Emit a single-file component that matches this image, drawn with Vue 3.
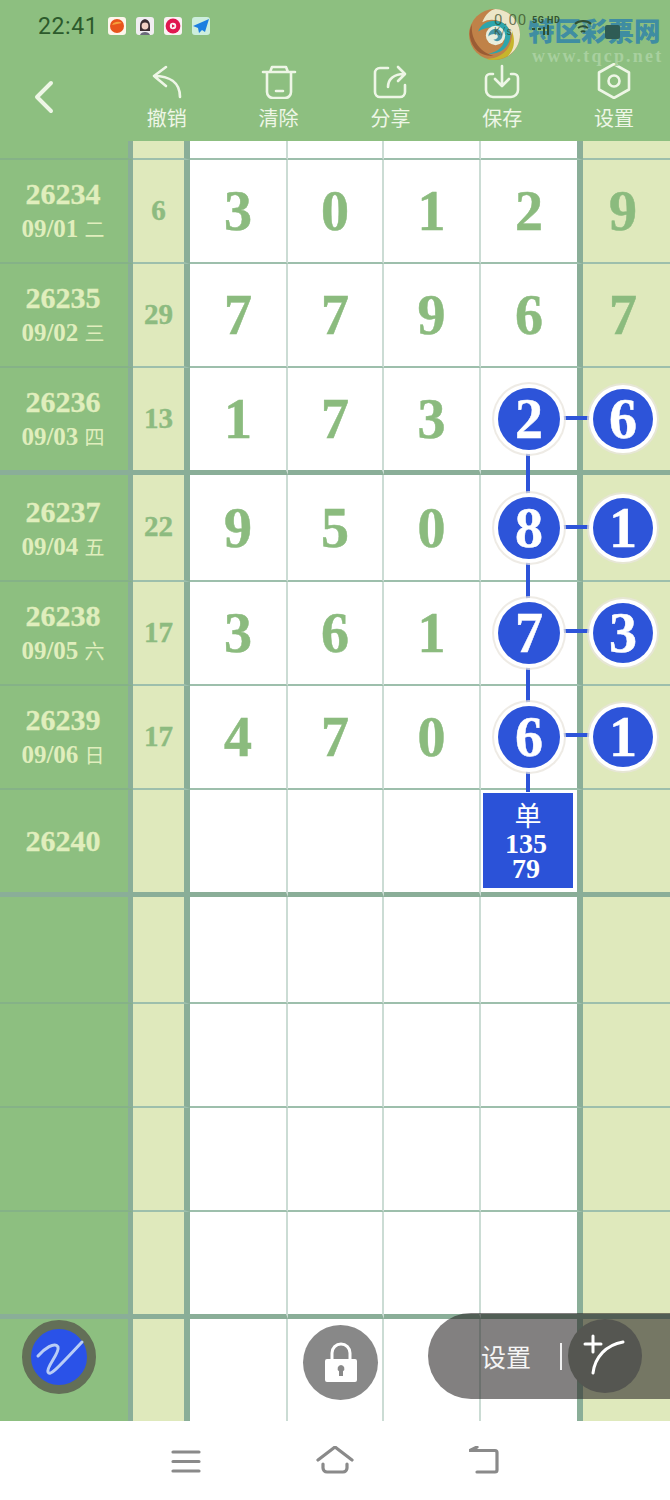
<template>
  <div class="page">
    <header class="top">
      <div class="status">
        <span class="time">22:41</span>
        <div class="notify">
          <svg class="app" viewBox="0 0 18 18"><rect width="18" height="18" rx="3" fill="#fdf6ec"/><circle cx="9" cy="9" r="7" fill="#e8541c"/><path d="M4 8a6 4 0 0 1 10-2" fill="#f5a03c"/></svg>
          <svg class="app" viewBox="0 0 18 18"><rect width="18" height="18" rx="3" fill="#f2eef2"/><path d="M4 9c0-9 10-9 10 0v5H4z" fill="#3a2c30"/><circle cx="9" cy="9" r="3.400" fill="#f1cfc2"/><path d="M4 18c1-4 9-4 10 0z" fill="#6a6a7a"/></svg>
          <svg class="app" viewBox="0 0 18 18"><rect width="18" height="18" rx="3" fill="#fbf2f4"/><circle cx="9" cy="9" r="7.400" fill="#e0174f"/><circle cx="9" cy="9" r="3.200" fill="#fbf2f4"/><path d="M8 7.300 11 9 8 10.700z" fill="#e0174f"/></svg>
          <svg class="app" viewBox="0 0 18 18"><rect width="18" height="18" rx="3" fill="#cdeedd"/><path d="M17 2 1 9l5 2 1 5 3-3 3 2z" fill="#1c7fe0"/></svg>
        </div>
      </div>

      <div class="toolbar">
        <div class="back">
          <svg width="24" height="36" viewBox="0 0 24 36"><path d="M19 4 5 18l14 14" class="line thick-line"/></svg>
        </div>
        <div class="tool">
          <svg class="tool-icon" viewBox="0 0 36 36"><path d="M17 4 5 13l12 10M5 13c15 0 26 6 26 21" class="line"/></svg>
          <span>撤销</span>
        </div>
        <div class="tool">
          <svg class="tool-icon" viewBox="0 0 36 36"><path d="M2 9h32M9 9l2-5h14l2 5M6 9v20a6 6 0 0 0 6 6h12a6 6 0 0 0 6-6V9M15 28h7" class="line"/></svg>
          <span>清除</span>
        </div>
        <div class="tool">
          <svg class="tool-icon" viewBox="0 0 36 36"><path d="M16 5H8a5 5 0 0 0-5 5v19a5 5 0 0 0 5 5h20a5 5 0 0 0 5-5v-7M16 24c0-8 6-13 16-13M26 4l7 7-7 7" class="line"/></svg>
          <span>分享</span>
        </div>
        <div class="tool">
          <svg class="tool-icon" viewBox="0 0 36 36"><path d="M9 11H6a4 4 0 0 0-4 4v12a7 7 0 0 0 7 7h18a7 7 0 0 0 7-7V15a4 4 0 0 0-4-4h-3M18 3v19M11 16l7 7 7-7" class="line"/></svg>
          <span>保存</span>
        </div>
        <div class="tool">
          <svg class="tool-icon" viewBox="0 0 36 36"><path d="M18 1l15 8.500v17L18 35 3 26.500v-17z" class="line"/><circle cx="18" cy="18" r="5.500" class="line"/></svg>
          <span>设置</span>
        </div>
      </div>

      <!-- 水印 -->
      <div class="watermark">
        <svg class="wm-logo" viewBox="0 0 50 50">
          <circle cx="25" cy="25" r="25" fill="#c08248"/>
          <path d="M26 0C40 1 50 12 50 25c0 9-5 17-12 21 6-8 7-19 1-27C33 11 22 8 13 13c3-8 8-12 13-13z" fill="#ece6c8"/>
          <path d="M38 46c-7 4-15 5-21 3 11 0 21-6 24-17 2-7 1-11 1-11 4 10 2 20-4 25z" fill="#c6b52c"/>
          <path d="M9 22c3-8 12-12 20-10 9 2 13 10 11 18-2 9-11 15-21 14 10-2 16-8 16-16 0-6-5-10-11-10-6 0-11 2-15 4z" fill="#2ea5ac"/>
          <circle cx="26" cy="26" r="9.500" fill="#e9eddc"/>
          <path d="M19 27c0-6 6-9 10-7 4 2 5 7 2 10-2 2-5 2-7 0 3 0 5-2 4-4-1-2-6-2-9 1z" fill="#4795a8"/>
          <path d="M3 15C1 27 9 42 24 46 12 47 3 39 1 28 0 23 1 19 3 15z" fill="#9a5c34"/>
        </svg>
        <div class="net-speed">
          <span>0.00</span>
          <small>K/s</small>
        </div>
        <div class="wm-text">
          <div class="wm-name">特区彩票网</div>
          <div class="wm-url">www.tqcp.net</div>
        </div>
        <div class="net-5g">5G HD</div>
        <svg class="net-icons" width="100" height="24" viewBox="0 0 100 24">
          <path d="M0 12h3M6 12h3M12 10v8M16 8v10" class="sig"/>
          <path d="M43 7c4-4 12-4 16 0M46 11c3-2 7-2 10 0M49 15c1-1 3-1 4 0" class="sig"/>
          <rect x="73" y="8" width="15" height="14" rx="2" fill="#2f5c55"/>
        </svg>
      </div>
    </header>

    <main class="board">
      <div
        v-for="(row, i) in rows"
        :key="i"
        class="row"
        :class="row.size"
      >
        <div class="c-head">
          <div v-if="row.id" class="issue">{{ row.id }}</div>
          <div v-if="row.date" class="date">{{ row.date }} <span>{{ row.day }}</span></div>
        </div>
        <div class="c-sum">{{ row.sum }}</div>
        <div v-for="(n, j) in cellsOf(row)" :key="j" class="c-num" :class="'col-' + j">
          <span v-if="row.marked && j >= 3" class="dot">{{ n }}</span>
          <template v-else>{{ n }}</template>
          <div v-if="row.tag && j === 3" class="tag">
            <b>单</b>
            <span>135</span>
            <span>79</span>
          </div>
        </div>
      </div>

      <!-- 连线 -->
      <svg class="links" viewBox="0 0 670 1280">
        <path d="M528 277V651M528 277H624M528 386H624M528 490H624M528 594H624" />
      </svg>

      <div class="pen">
        <svg width="56" height="56" viewBox="0 0 56 56"><path d="M7 27C13 20 24 12 27 18 29 24 15 38 17 43 19 47 24 42 51 13" /></svg>
      </div>
      <div class="lock">
        <svg width="36" height="42" viewBox="0 0 36 42"><path d="M9 17V11a9 9 0 0 1 18 0v6" class="shackle"/><path d="M4 17h28a2 2 0 0 1 2 2v19a2 2 0 0 1-2 2H4a2 2 0 0 1-2-2V19a2 2 0 0 1 2-2zm14 6a3.500 3.500 0 0 0-2 6.300V34h4v-4.700A3.500 3.500 0 0 0 18 23z" fill="#fff" fill-rule="evenodd"/></svg>
      </div>
      <div class="pill">
        <span class="pill-text">设置</span>
        <i class="pill-bar"></i>
        <div class="pill-btn">
          <svg width="74" height="74" viewBox="0 0 74 74"><path d="M25 17v16M17 25h16M25 54C27 38 38 26 55 23" /></svg>
        </div>
      </div>
    </main>

    <footer class="nav">
      <svg width="30" height="24" viewBox="0 0 30 24"><path d="M2 3h26M2 12.500h26M2 22h26"/></svg>
      <svg width="38" height="30" viewBox="0 0 38 30"><path d="M2 14 19 1l17 13M7 18v4a4 4 0 0 0 4 4h16a4 4 0 0 0 4-4v-4"/></svg>
      <svg width="34" height="30" viewBox="0 0 34 30"><path d="M8 1 1 4.500h25a2 2 0 0 1 2 2V24a2 2 0 0 1-2 2H8"/></svg>
    </footer>
  </div>
</template>

<script setup>
const rows = [
  { size: 'top' },
  { size: 'short', id: '26234', date: '09/01', day: '二', sum: 6, nums: [3, 0, 1, 2, 9] },
  { size: 'short', id: '26235', date: '09/02', day: '三', sum: 29, nums: [7, 7, 9, 6, 7] },
  { size: 'tall', id: '26236', date: '09/03', day: '四', sum: 13, nums: [1, 7, 3, 2, 6], marked: true },
  { size: 'mid', id: '26237', date: '09/04', day: '五', sum: 22, nums: [9, 5, 0, 8, 1], marked: true },
  { size: 'short', id: '26238', date: '09/05', day: '六', sum: 17, nums: [3, 6, 1, 7, 3], marked: true },
  { size: 'short', id: '26239', date: '09/06', day: '日', sum: 17, nums: [4, 7, 0, 6, 1], marked: true },
  { size: 'tall', id: '26240', tag: true },
  { size: 'mid' },
  { size: 'short' },
  { size: 'short' },
  { size: 'tall' },
  { size: 'end' }
]

const cellsOf = (row) => row.nums || ['', '', '', '', '']
</script>

<style scoped>
.page {
  position: relative;
  width: 670px;
  height: 1500px;
  overflow: hidden;
  background: #fff;
  font-family: "Liberation Serif", "Noto Sans CJK SC", serif;
}

/* ---- 顶部 ---- */
.top {
  position: relative;
  height: 141px;
  background: #8dbf80;
  font-family: "Noto Sans CJK SC", sans-serif;
}
.status {
  display: flex;
  align-items: center;
  height: 52px;
  padding-left: 38px;
  box-sizing: border-box;
}
.time {
  font: 400 23px Roboto, sans-serif;
  color: #2c5a2c;
  letter-spacing: 0.6px;
}
.notify {
  display: flex;
  gap: 10px;
  margin-left: 10px;
}
.app { width: 18px; height: 18px; display: block; }

.toolbar {
  display: flex;
  height: 89px;
}
.back {
  width: 111px;
  padding: 27px 0 0 32px;
  box-sizing: border-box;
}
.back svg { display: block; }
.tool {
  width: 112px;
  display: flex;
  flex-direction: column;
  align-items: center;
  color: #eef6e6;
  font-size: 20px;
  line-height: 28px;
}
.tool-icon {
  width: 36px;
  height: 36px;
  margin: 11px 0 5px;
  flex: none;
}
.line {
  fill: none;
  stroke: #eef6e6;
  stroke-width: 2.600;
  stroke-linecap: round;
  stroke-linejoin: round;
}
.thick-line { stroke-width: 4; }

/* ---- 水印 ---- */
.watermark {
  position: absolute;
  left: 469px;
  top: 9px;
  width: 200px;
  height: 54px;
}
.wm-logo {
  position: absolute;
  left: 0;
  top: 0;
  width: 51px;
  height: 51px;
}
.wm-text {
  position: absolute;
  left: 59px;
  top: 5px;
  width: 135px;
}
.wm-name {
  font: 900 26.500px/32px "Noto Sans CJK SC", sans-serif;
  color: #3f8da2;
  white-space: nowrap;
}
.wm-url {
  font: 700 18px/20px "Liberation Serif", serif;
  color: #a8d09f;
  letter-spacing: 2.200px;
  white-space: nowrap;
  margin: 0 0 0 4px;
}
.net-speed {
  position: absolute;
  left: 25px;
  top: 4px;
  z-index: 1;
  display: flex;
  flex-direction: column;
  font: 400 15px/14px Roboto, sans-serif;
  letter-spacing: 1px;
  color: rgba(50, 70, 30, 0.7);
}
.net-speed small { font-size: 10px; line-height: 10px; }
.net-5g {
  position: absolute;
  left: 63px;
  top: 6px;
  z-index: 1;
  font: 700 9px/10px Roboto, sans-serif;
  letter-spacing: 0.5px;
  color: #33522e;
}
.net-icons {
  position: absolute;
  left: 63px;
  top: 8px;
  z-index: 1;
}
.sig {
  fill: none;
  stroke: #2f4f33;
  stroke-width: 2;
}

/* ---- 表格 ---- */
.board {
  position: relative;
  height: 1280px;
}
.row {
  display: grid;
  grid-template-columns: 133px 57px 98px 96px 97px 102px 87px;
}
.row.top { height: 19px; }
.row.short { height: 104px; }
.row.tall, .row.mid { height: 107px; }
.row.end { height: 102px; }

.row > div {
  box-sizing: border-box;
  border-bottom: 2px solid #9dbfac;
  display: flex;
  align-items: center;
  justify-content: center;
}
.row.tall > div { border-bottom-width: 5px; border-bottom-color: #8aae98; }
.row.end > div { border-bottom: none; }

.c-head {
  flex-direction: column;
  background: #8dbf80;
  color: #e0eebd;
  border-right: 5px solid #8aae98;
  padding-right: 2px;
}
.row:not(.tall) > .c-head { border-bottom-color: #85b287; }
.row.mid > .c-head { padding-top: 3px; }
.issue {
  font-size: 30px;
  font-weight: 700;
  line-height: 32px;
  -webkit-text-stroke: 0.3px #e0eebd;
}
.date {
  font-size: 25px;
  font-weight: 700;
  line-height: 30px;
  margin-top: 4px;
  white-space: nowrap;
}
.date span {
  font: 400 20px "Noto Sans CJK SC", sans-serif;
}
.c-sum {
  background: #dfe9bc;
  color: #8dbb80;
  font-size: 29px;
  font-weight: 700;
  border-right: 6px solid #8aae98;
  padding-bottom: 2px;
  -webkit-text-stroke: 0.4px #8dbb80;
}
.c-num {
  position: relative;
  background: #fff;
  color: #8bbb7e;
  font-size: 56px;
  font-weight: 700;
  border-right: 2px solid #cbdcd4;
  -webkit-text-stroke: 0.5px #8bbb7e;
}
.row > .col-3 { border-right: 6px solid #8aae98; }
.row > .col-4 {
  background: #dfe9bc;
  border-right: none;
  padding-right: 7px;
}

.dot {
  position: relative;
  z-index: 2;
  width: 62px;
  height: 62px;
  border-radius: 50%;
  background: #2d54d9;
  color: #fff;
  -webkit-text-stroke: 0.5px #fff;
  line-height: 62px;
  text-align: center;
  box-shadow: 0 0 0 4px #fff, 0 0 0 6px rgba(232, 228, 220, 0.75);
}
.col-4 .dot {
  width: 60px;
  height: 60px;
  line-height: 60px;
}
.tag {
  position: relative;
  z-index: 2;
  flex: 1;
  align-self: stretch;
  margin: 2px 3px 3px 1px;
  padding-bottom: 2px;
  background: #2b52d8;
  border: 1px solid #fff;
  color: #fff;
  display: flex;
  flex-direction: column;
  align-items: center;
  justify-content: center;
  font-size: 28px;
  line-height: 25px;
  -webkit-text-stroke: 0;
}
.tag span { margin-right: 4px; }
.tag b {
  font: 400 27px/32px "Noto Sans CJK SC", sans-serif;
}

.links {
  position: absolute;
  left: 0;
  top: 0;
  width: 670px;
  height: 1280px;
  z-index: 1;
  pointer-events: none;
}
.links path {
  fill: none;
  stroke: #2d54d9;
  stroke-width: 4;
}

/* ---- 浮动按钮 ---- */
.pen {
  position: absolute;
  left: 22px;
  top: 1179px;
  width: 56px;
  height: 56px;
  border: 9px solid #636f57;
  border-radius: 50%;
  background: #2a52e8;
  z-index: 3;
}
.pen svg { display: block; }
.pen path {
  fill: none;
  stroke: #b9cdf6;
  stroke-width: 3;
  stroke-linecap: round;
  stroke-linejoin: round;
}
.lock {
  position: absolute;
  left: 303px;
  top: 1184px;
  width: 75px;
  height: 75px;
  border-radius: 50%;
  background: #888;
  display: flex;
  align-items: center;
  justify-content: center;
  z-index: 3;
}
.shackle {
  fill: none;
  stroke: #fff;
  stroke-width: 3;
}
.pill {
  position: absolute;
  left: 428px;
  top: 1172px;
  width: 242px;
  height: 86px;
  border-radius: 43px 0 0 43px;
  background: rgba(40, 36, 36, 0.58);
  display: flex;
  align-items: center;
  z-index: 3;
}
.pill-text {
  margin-left: 53px;
  font: 400 25px "Noto Sans CJK SC", sans-serif;
  color: #f5f5f5;
}
.pill-bar {
  width: 2px;
  height: 27px;
  margin-left: 29px;
  background: #f0f0f0;
}
.pill-btn {
  width: 74px;
  height: 74px;
  margin-left: 6px;
  border-radius: 50%;
  background: #555651;
}
.pill-btn svg { display: block; }
.pill-btn path {
  fill: none;
  stroke: #fff;
  stroke-width: 3;
  stroke-linecap: round;
}

/* ---- 底部导航 ---- */
.nav {
  height: 79px;
  background: #fff;
  display: flex;
  align-items: center;
  justify-content: center;
  gap: 115px;
  padding-left: 4px;
  box-sizing: border-box;
}
.nav path {
  fill: none;
  stroke: #8a8a8a;
  stroke-width: 3.200;
  stroke-linecap: round;
  stroke-linejoin: round;
}
</style>
